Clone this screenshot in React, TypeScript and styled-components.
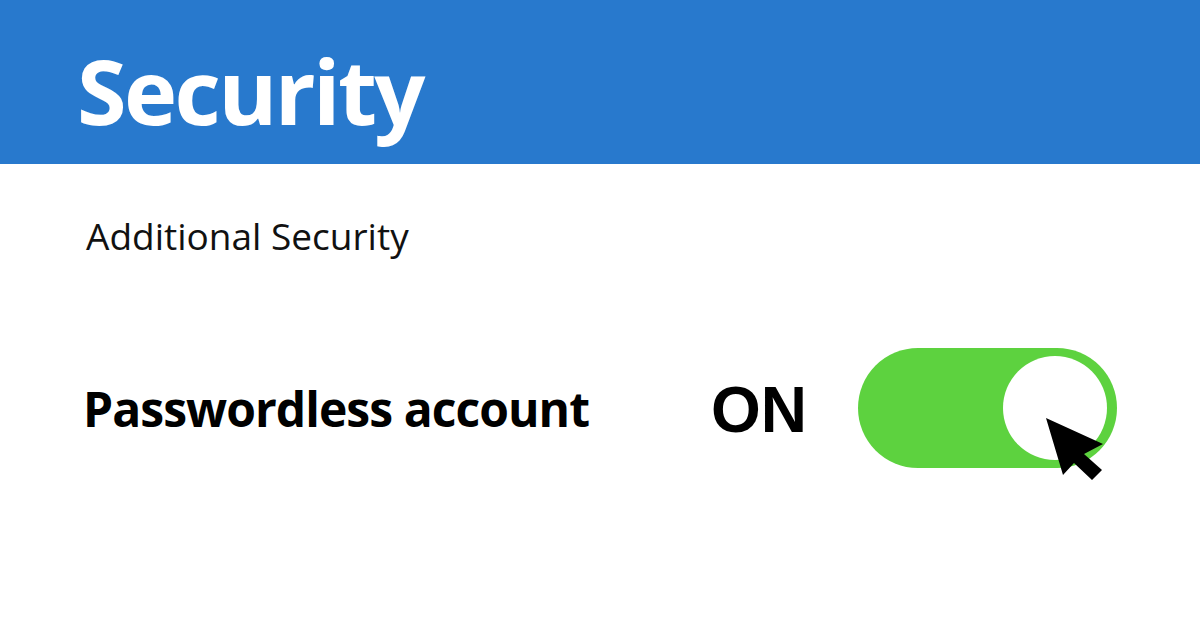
import React from "react";
import styled, { createGlobalStyle } from "styled-components";

const Global = createGlobalStyle`
  html, body { margin: 0; padding: 0; background: #ffffff; }
  body { width: 1200px; height: 630px; overflow: hidden; font-family: "Open Sans", "Noto Sans", sans-serif; }
`;

const Page = styled.div`
  width: 1200px;
  height: 630px;
  display: flex;
  flex-direction: column;
  background: #ffffff;
`;

const Header = styled.header`
  height: 164px;
  background: #2879cd;
  display: flex;
  align-items: center;
  padding-left: 77px;
  box-sizing: border-box;
`;

const Title = styled.h1`
  margin: 0;
  color: #ffffff;
  font-family: "Open Sans", sans-serif;
  font-weight: 700;
  font-size: 90px;
  letter-spacing: -2.6px;
  line-height: 1;
  padding-top: 16px;
`;

const Body = styled.main`
  display: flex;
  flex-direction: column;
  padding: 48px 0 0 86px;
`;

const Subtitle = styled.h2`
  margin: 0;
  font-family: "Open Sans", sans-serif;
  font-weight: 400;
  font-size: 37px;
  line-height: 48px;
  color: #111111;
  letter-spacing: 0;
`;

const SettingRow = styled.div`
  display: flex;
  align-items: center;
  margin-top: 88px;
`;

const Label = styled.span`
  width: 629px;
  flex: none;
  margin-left: -3px;
  font-family: "Open Sans", sans-serif;
  font-weight: 700;
  font-size: 48px;
  color: #000000;
  letter-spacing: -0.95px;
`;

const State = styled.span`
  width: 146px;
  flex: none;
  font-family: "Liberation Sans", Arial, sans-serif;
  font-weight: 700;
  font-size: 64px;
  color: #000000;
  margin-left: -1px;
  padding-top: 4px;
`;

const Toggle = styled.div<{ $on: boolean }>`
  position: relative;
  width: 259px;
  height: 120px;
  margin-left: 1px;
  border-radius: 60px;
  background: ${(p) => (p.$on ? "#5dd23f" : "#cccccc")};
  display: flex;
  align-items: center;
  justify-content: ${(p) => (p.$on ? "flex-end" : "flex-start")};
  padding: 0 10px;
  box-sizing: border-box;
`;

const Knob = styled.div`
  width: 104px;
  height: 104px;
  border-radius: 50%;
  background: #ffffff;
`;

const Cursor = styled.svg`
  position: absolute;
  left: 188px;
  top: 70px;
  overflow: visible;
`;

export default function App() {
  return (
    <>
      <Global />
      <Page>
        <Header>
          <Title>Security</Title>
        </Header>
        <Body>
          <Subtitle>Additional Security</Subtitle>
          <SettingRow>
            <Label>Passwordless account</Label>
            <State>ON</State>
            <Toggle $on>
              <Knob />
              <Cursor width="58" height="63" viewBox="0 0 58 63">
                <path
                  d="M0 0 L17 57 L28 45 L46 62 L56 52 L38 36 L57 26 Z"
                  fill="#000000"
                />
              </Cursor>
            </Toggle>
          </SettingRow>
        </Body>
      </Page>
    </>
  );
}
